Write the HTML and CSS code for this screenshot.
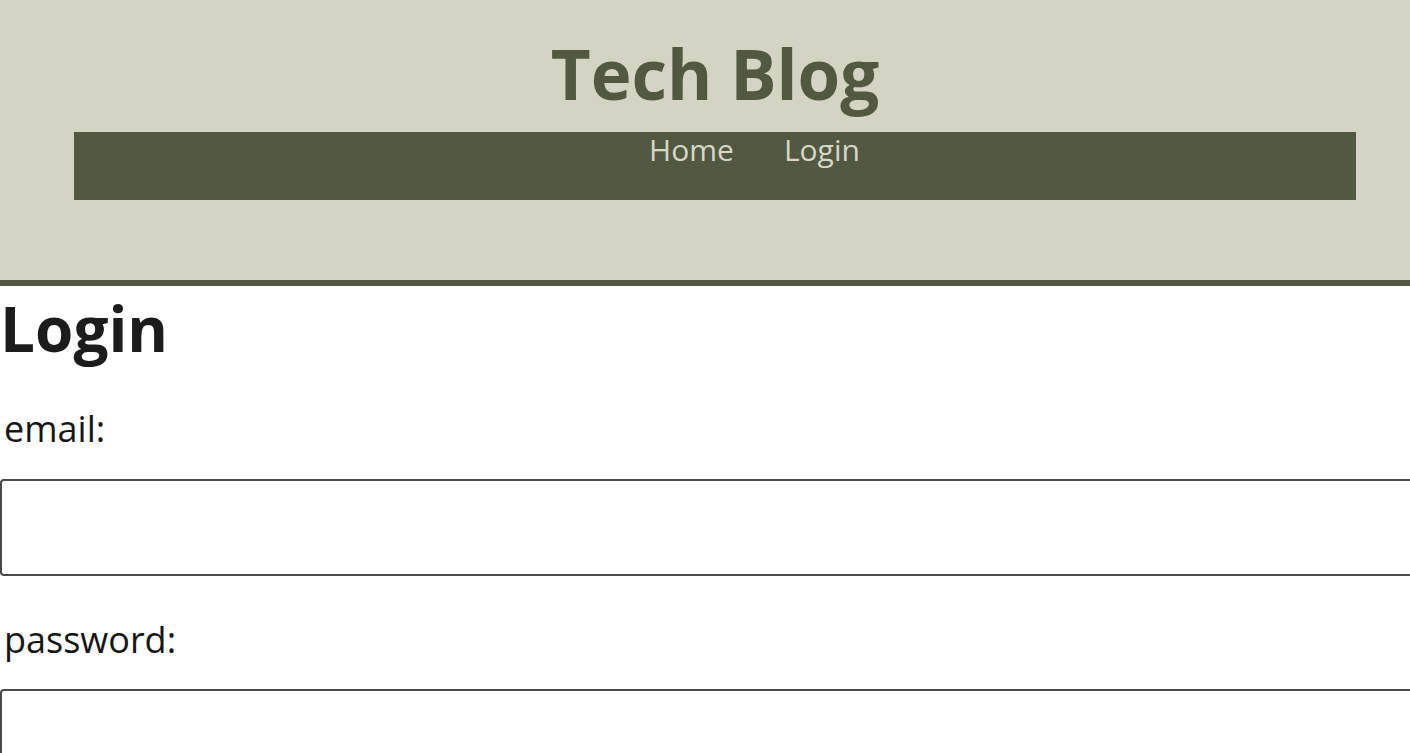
FILE: index.html
```html
<!DOCTYPE html>
<html lang="en">
<head>
<meta charset="utf-8">
<title>Tech Blog</title>
<link rel="stylesheet" href="styles.css">
</head>
<body>
<header class="site-header">
  <h1 class="site-title">Tech Blog</h1>
  <nav class="site-nav">
    <a class="nav-link" href="#">Home</a>
    <a class="nav-link" href="#">Login</a>
  </nav>
</header>
<main class="content">
  <h2 class="page-title">Login</h2>
  <form class="login-form">
    <label class="field-label" for="email">email:</label>
    <input class="field-input" id="email" type="email">
    <label class="field-label" for="password">password:</label>
    <input class="field-input" id="password" type="password">
  </form>
</main>
</body>
</html>
```
FILE: styles.css
```css
html {
  overflow: hidden;
}
body {
  margin: 0;
  font-family: "Open Sans", "Noto Sans", sans-serif;
  background: #ffffff;
  color: #1c1c1c;
}
.site-header {
  background: #d3d4c4;
  border-bottom: 6px solid #525841;
  padding: 31px 0 0 20px;
  box-sizing: border-box;
  height: 286px;
}
.site-title {
  margin: 0 0 17px;
  text-align: center;
  font-size: 69px;
  line-height: 1.22;
  font-weight: 700;
  color: #525841;
}
.site-nav {
  margin: 0 54px;
  height: 68px;
  box-sizing: border-box;
  padding: 3px 0 0 79px;
  background: #525841;
  display: flex;
  justify-content: center;
  gap: 50px;
}
.nav-link {
  font-size: 30px;
  line-height: 1;
  color: #d6d7c6;
  text-decoration: none;
}
.content {
  padding-top: 5px;
}
.page-title {
  margin: 0;
  font-size: 62px;
  line-height: 1.2;
  font-weight: 700;
  color: #1c1c1c;
}
.login-form {
  display: flex;
  flex-direction: column;
  align-items: flex-start;
}
.field-label {
  margin: 42px 0 28px 4px;
  font-size: 36px;
  line-height: 1.2;
  color: #161616;
}
.field-input {
  margin: 0;
  width: calc(100% + 40px);
  height: 97px;
  box-sizing: border-box;
  border: 2px solid #4a4a4a;
  border-radius: 4px;
  font-size: 30px;
  background: #ffffff;
}
```
